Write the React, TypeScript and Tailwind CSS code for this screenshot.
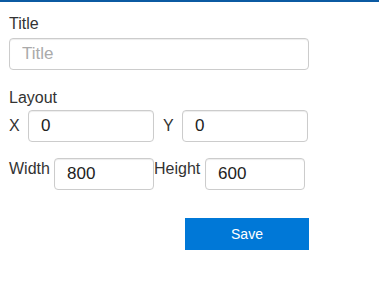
import { useState } from "react";

const inputCls =
  "h-8 rounded-[4px] border border-[#cccccc] bg-white px-3 text-[17px] text-[#222222] placeholder:text-[#aaaaaa] shadow-[inset_0_1px_1px_rgba(0,0,0,0.075)] outline-none";

export default function App() {
  const [title, setTitle] = useState("");
  const [x, setX] = useState("0");
  const [y, setY] = useState("0");
  const [width, setWidth] = useState("800");
  const [height, setHeight] = useState("600");

  return (
    <div
      className="min-h-[290px] w-[379px] border-t-2 border-[#0b5aa2] bg-white px-[9px] pt-[13px] text-[16px] leading-[18px] text-[#333333]"
      style={{ fontFamily: '"Liberation Sans", Arial, sans-serif' }}
    >
      <div className="w-[300px]">
        <label className="block">Title</label>
        <input
          className={`${inputCls} mt-[5px] block w-[300px]`}
          placeholder="Title"
          value={title}
          onChange={(e) => setTitle(e.target.value)}
        />

        <div className="mt-[19px]">Layout</div>
        <div className="mt-[3px] flex items-center">
          <span className="w-[19px]">X</span>
          <input
            className={`${inputCls} w-[126px]`}
            value={x}
            onChange={(e) => setX(e.target.value)}
          />
          <span className="ml-[9px] w-[19px]">Y</span>
          <input
            className={`${inputCls} w-[126px]`}
            value={y}
            onChange={(e) => setY(e.target.value)}
          />
        </div>

        <div className="mt-[16px] flex items-start">
          <span className="mt-[2px] w-[45px]">Width</span>
          <input
            className={`${inputCls} w-[100px]`}
            value={width}
            onChange={(e) => setWidth(e.target.value)}
          />
          <span className="mt-[2px] w-[51px]">Height</span>
          <input
            className={`${inputCls} w-[100px]`}
            value={height}
            onChange={(e) => setHeight(e.target.value)}
          />
        </div>

        <div className="mt-[28px] flex justify-end">
          <button className="h-8 w-[124px] bg-[#0078d7] text-[14px] text-white">
            Save
          </button>
        </div>
      </div>
    </div>
  );
}
